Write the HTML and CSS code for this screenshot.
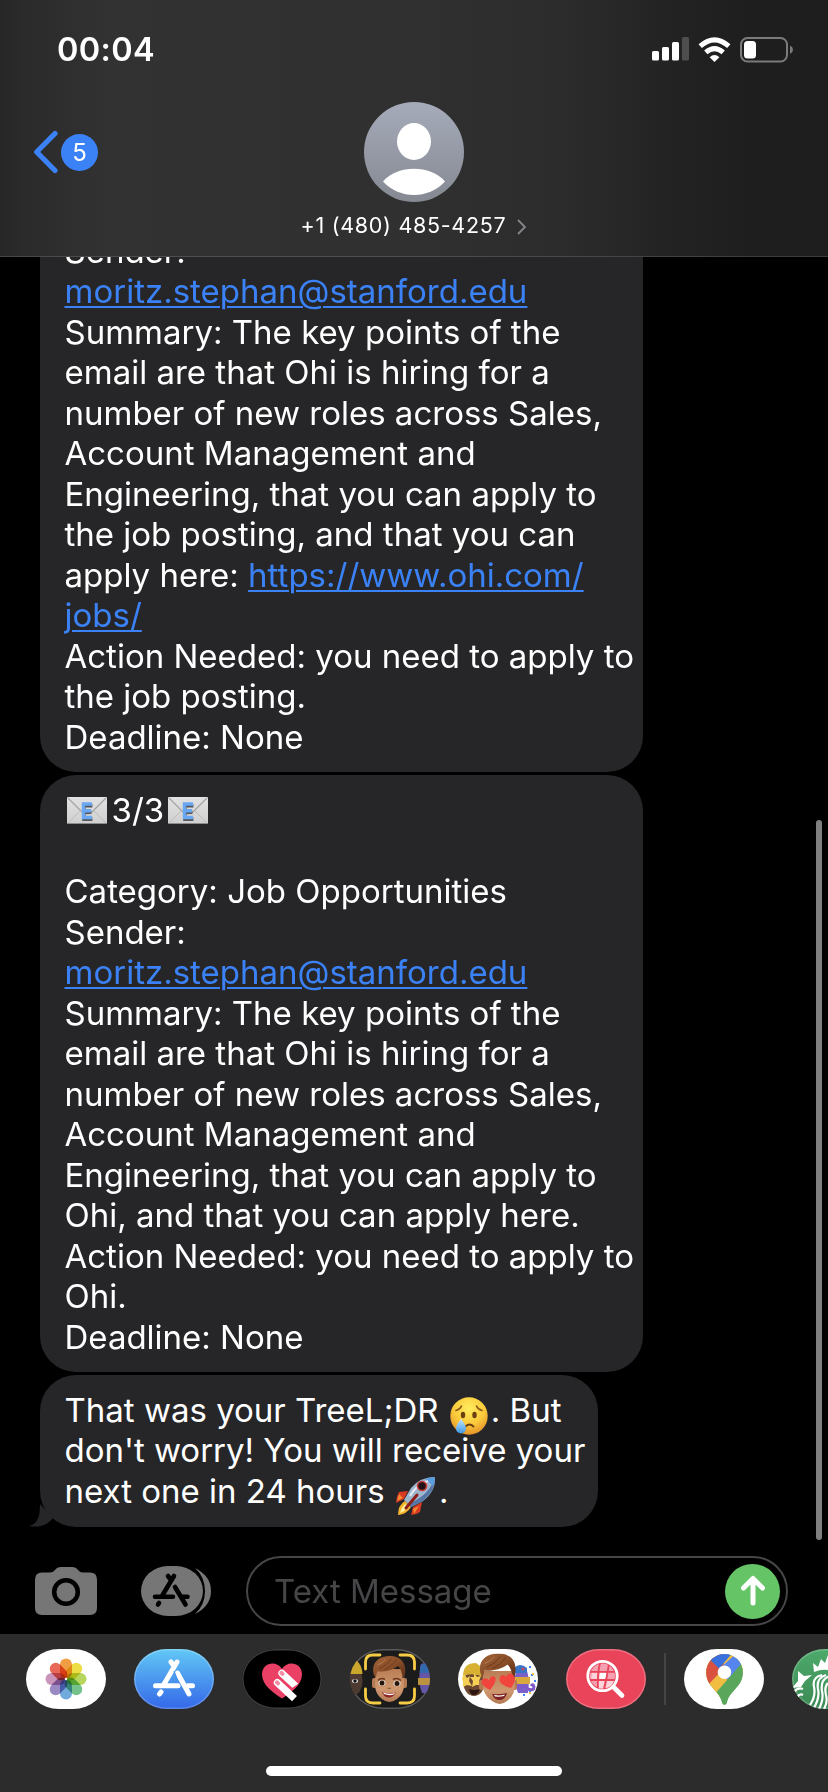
FILE: index.html
```html
<!DOCTYPE html>
<html lang="en">
<head>
    <meta charset="UTF-8">
    <meta name="viewport" content="width=device-width, initial-scale=1.0">
    <title>Messages</title>
    <link rel="stylesheet" href="styles.css">
</head>
<body>
    <!-- shared drawings -->
    <svg class="defs" width="0" height="0">
        <defs>
            <linearGradient id="paper" x1="0" y1="0" x2="0" y2="1">
                <stop offset="0" stop-color="#e2e2e2"/>
                <stop offset="1" stop-color="#cfcfcf"/>
            </linearGradient>
            <radialGradient id="yellow" cx="0.5" cy="0.3" r="0.7">
                <stop offset="0" stop-color="#ffec5e"/>
                <stop offset="0.6" stop-color="#fbc93a"/>
                <stop offset="1" stop-color="#e3922a"/>
            </radialGradient>
            <linearGradient id="tear" x1="0" y1="0" x2="0" y2="1">
                <stop offset="0" stop-color="#bfe6ff"/>
                <stop offset="1" stop-color="#3f97e0"/>
            </linearGradient>
            <linearGradient id="skin" x1="0" y1="0" x2="0" y2="1">
                <stop offset="0" stop-color="#b97d54"/>
                <stop offset="0.6" stop-color="#d09870"/>
                <stop offset="1" stop-color="#b47a54"/>
            </linearGradient>
            <linearGradient id="hair" x1="0" y1="0" x2="1" y2="1">
                <stop offset="0" stop-color="#a06238"/>
                <stop offset="0.5" stop-color="#8a4f29"/>
                <stop offset="1" stop-color="#5a2f17"/>
            </linearGradient>
            <symbol id="email" viewBox="0 0 40 27">
                <rect width="40" height="27" rx="1" fill="url(#paper)"/>
                <path d="M1 26 14 13M39 26 26 13" stroke="#bdbdbd" stroke-width="1" fill="none"/>
                <path d="M1 1 15 15Q20 19 25 15L39 1" stroke="#a3a3a5" stroke-width="1.2" fill="none"/>
                <path d="M0 26.5H40" stroke="#8b8b8b" stroke-width="1"/>
                <path d="M25 7.500H16.500V21H25M16.500 14H24" stroke="#55565b" stroke-width="3.400" fill="none" transform="translate(.4 1.200)"/>
                <path d="M25 7H16.500V20.500H25M16.500 13.700H24" stroke="#6aa7f2" stroke-width="3.400" fill="none"/>
            </symbol>
            <symbol id="boy-hair" viewBox="0 0 40 50">
                <path d="M3 20C0 8 8 0 21 0 34 0 41 9 37 24L35 25C35 19 33 14 30 11 24 16 13 18 7 17L5 25Z" fill="url(#hair)"/>
                <path d="M9 14Q18 10 23 3M15 15Q24 11 28 4M32 11Q36 14 36 20" stroke="#6b3a1c" stroke-width="1" fill="none"/>
                <path d="M7 10Q13 8 17 3" stroke="#b87c50" stroke-width="1" fill="none"/>
            </symbol>
        </defs>
    </svg>

    <div class="phone">
        <header class="header">
            <div class="status">
                <div class="time">00:04</div>
                <div class="status-icons">
                    <svg width="37" height="24" viewBox="0 0 37 24">
                        <rect x="0" y="14" width="7" height="9.500" rx="1.500" fill="#fff"/>
                        <rect x="10" y="10" width="7" height="13.500" rx="1.500" fill="#fff"/>
                        <rect x="20" y="5" width="7" height="18.500" rx="1.500" fill="#fff"/>
                        <rect x="30" y="0" width="7" height="23.500" rx="1.500" fill="#4e4e4e"/>
                    </svg>
                    <svg width="33" height="25" viewBox="0 0 33 25">
                        <g fill="none" stroke="#fff" stroke-width="5">
                            <path d="M2.200 9.200Q16.500 -3.400 30.800 9.200"/>
                            <path d="M7.800 15.400Q16.500 7.800 25.200 15.400"/>
                        </g>
                        <path d="M11.600 20.200Q16.500 16 21.400 20.200L16.500 25Z" fill="#fff"/>
                    </svg>
                    <svg width="54" height="26" viewBox="0 0 54 26">
                        <rect x="1" y="1" width="46" height="23.500" rx="6.500" fill="none" stroke="#7b7b7b" stroke-width="2"/>
                        <rect x="4" y="4" width="12" height="17.500" rx="3.500" fill="#fff"/>
                        <path d="M50 8.500Q53 10 53 12.700T50 17Z" fill="#7b7b7b"/>
                    </svg>
                </div>
            </div>
            <div class="back">
                <svg width="26" height="44" viewBox="0 0 26 44">
                    <path d="M22 3.500 3.700 22 22 40.500" fill="none" stroke="#3b82f7" stroke-width="5.200" stroke-linecap="round" stroke-linejoin="round"/>
                </svg>
                <span class="unread">5</span>
            </div>
            <div class="contact">
                <div class="avatar">
                    <svg width="100" height="100" viewBox="0 0 100 100">
                        <ellipse cx="50" cy="39.500" rx="17" ry="18.500" fill="#fff"/>
                        <path d="M19 79.500C33 62.500 67 62.500 81 79.500 64 97.500 36 97.500 19 79.500Z" fill="#fff"/>
                    </svg>
                </div>
                <div class="number">
                    <span>+1 (480) 485-4257</span>
                    <svg width="10" height="16" viewBox="0 0 10 16">
                        <path d="M1 1 8 8 1 15" fill="none" stroke="#85868c" stroke-width="1.800"/>
                    </svg>
                </div>
            </div>
        </header>

        <main class="chat">
            <div class="bubble">
                Sender:<br>
                <a class="link" href="#">moritz.stephan@stanford.edu</a><br>
                Summary: The key points of the<br>
                email are that Ohi is hiring for a<br>
                number of new roles across Sales,<br>
                Account Management and<br>
                Engineering, that you can apply to<br>
                the job posting, and that you can<br>
                apply here: <a class="link" href="#">https://www.ohi.com/<br>
                jobs/</a><br>
                Action Needed: you need to apply to<br>
                the job posting.<br>
                Deadline: None
            </div>
            <div class="bubble">
                <svg class="mail" width="40" height="27"><use href="#email"/></svg>3/3<svg class="mail" width="40" height="27"><use href="#email"/></svg><br>
                <br>
                Category: Job Opportunities<br>
                Sender:<br>
                <a class="link" href="#">moritz.stephan@stanford.edu</a><br>
                Summary: The key points of the<br>
                email are that Ohi is hiring for a<br>
                number of new roles across Sales,<br>
                Account Management and<br>
                Engineering, that you can apply to<br>
                Ohi, and that you can apply here.<br>
                Action Needed: you need to apply to<br>
                Ohi.<br>
                Deadline: None
            </div>
            <div class="bubble last">
                That was your TreeL;DR
                <svg class="emoji" width="38" height="38" viewBox="0 0 38 38">
                    <circle cx="19" cy="19" r="18.700" fill="url(#yellow)"/>
                    <ellipse cx="13" cy="18" rx="2.200" ry="3.200" fill="#6b3f12"/>
                    <ellipse cx="24.500" cy="18" rx="2.200" ry="3.200" fill="#6b3f12"/>
                    <path d="M6 13.500Q10 12.500 11.500 9M26.500 9Q28 12.500 32 13.500" fill="none" stroke="#8a5518" stroke-width="1.600" stroke-linecap="round"/>
                    <path d="M15.500 29.500Q19.500 25.500 23.500 29.500" fill="none" stroke="#6b3f12" stroke-width="1.800" stroke-linecap="round"/>
                    <path d="M11 22Q6 28 6 31.500A5 5 0 0 0 16 31.500Q16 28 11 22Z" fill="url(#tear)"/>
                </svg>. But<br>
                don't worry! You will receive your<br>
                next one in 24 hours
                <svg class="emoji rocket" width="40" height="40" viewBox="0 0 40 40">
                    <path d="M12 15 3 16Q0 21 0 27L8 23ZM26 26 24 36Q20 39 15 39L17 31Z" fill="#d93a22"/>
                    <path d="M3 18 1 25 7 22ZM23 30 18 38 17 33Z" fill="#f58a32"/>
                    <path d="M9 25Q2 29 2 39 11 38 15 31Z" fill="#f6b52d"/>
                    <path d="M9 28Q5 32 4 37 9 35 13 31Z" fill="#fff0a0"/>
                    <path d="M39 1Q24 1 15 12L8 24 15 31 27 25Q40 15 39 1Z" fill="#9fb6cf"/>
                    <path d="M39 1Q40 14 27 25L15 31 12 28Q34 19 39 1Z" fill="#5677a5"/>
                    <path d="M39 1Q34 1 29 3 33 6 37 10 39 6 39 1Z" fill="#5a9cdd"/>
                    <path d="M32 5Q20 9 14 20" stroke="#e6edf5" stroke-width="2" fill="none"/>
                    <circle cx="26" cy="10" r="4.500" fill="#23141a" stroke="#c83a33" stroke-width="1.600"/>
                    <path d="M21 19 10 32" stroke="#8c1f1a" stroke-width="3" stroke-linecap="round"/>
                </svg>.
                <svg class="tail" width="26" height="23" viewBox="0 0 26 23">
                    <path d="M11 0C11 12 9 20 0 22 11 24 18 21 24 14Z" fill="#262628"/>
                </svg>
            </div>
            <div class="scrollbar"></div>
        </main>

        <div class="composer">
            <svg class="camera" width="62" height="48" viewBox="0 0 62 48">
                <path d="M7 5.500H15Q18 5.500 20 3 22 0 26 0H37Q41 0 43 3 45 5.500 48 5.500H55Q62 5.500 62 12.500V41Q62 48 55 48H7Q0 48 0 41V12.500Q0 5.500 7 5.500Z" fill="#767676"/>
                <circle cx="31" cy="25" r="11.800" fill="none" stroke="#000" stroke-width="4.500"/>
            </svg>
            <svg class="apps" width="70" height="50" viewBox="0 0 70 50">
                <path d="M54 2Q70 10 70 25T54 48Q64 39 64 25T54 2Z" fill="#767676"/>
                <rect x="0" y="0" width="62" height="50" rx="27" ry="25" fill="#767676"/>
                <g stroke="#000" stroke-width="4.600" stroke-linecap="round" fill="none">
                    <path d="M33 10 21 30M27 10 30 14M34 21 44.500 38.500M14 30.700H32M41 30.700H46.500M18 37 17 38.500"/>
                </g>
            </svg>
            <div class="field">
                <span class="placeholder">Text Message</span>
                <div class="send">
                    <svg width="26" height="32" viewBox="0 0 26 32">
                        <path d="M13 28V4M3.500 13 13 3.500 22.500 13" fill="none" stroke="#fff" stroke-width="5" stroke-linecap="round" stroke-linejoin="round"/>
                    </svg>
                </div>
            </div>
        </div>

        <footer class="dock">
            <div class="app-row">
                <div class="app photos">
                    <svg width="80" height="60" viewBox="-40 -30 80 60">
                        <g class="petals">
                            <rect x="-6" y="-20.500" width="12" height="20" rx="6" fill="#f0983a"/>
                            <rect x="-6" y="-20.500" width="12" height="20" rx="6" fill="#ecdc3a" transform="rotate(45)"/>
                            <rect x="-6" y="-20.500" width="12" height="20" rx="6" fill="#b4d455" transform="rotate(90)"/>
                            <rect x="-6" y="-20.500" width="12" height="20" rx="6" fill="#6fbf86" transform="rotate(135)"/>
                            <rect x="-6" y="-20.500" width="12" height="20" rx="6" fill="#6ba6da" transform="rotate(180)"/>
                            <rect x="-6" y="-20.500" width="12" height="20" rx="6" fill="#9583c0" transform="rotate(225)"/>
                            <rect x="-6" y="-20.500" width="12" height="20" rx="6" fill="#c78fb8" transform="rotate(270)"/>
                            <rect x="-6" y="-20.500" width="12" height="20" rx="6" fill="#e8614f" transform="rotate(315)"/>
                        </g>
                        <circle r="1.200" fill="#fff"/>
                    </svg>
                </div>
                <div class="app store">
                    <svg width="80" height="60" viewBox="0 0 80 60">
                        <g stroke="#fff" stroke-width="5" stroke-linecap="round" fill="none">
                            <path d="M43 13 29.500 36M37 13 40 17M43.500 24 55 45M21.500 36.700H44M54 36.700H58.500M27 43 25.500 45"/>
                        </g>
                        <path d="M40 22 44 33" stroke="#4a94f0" stroke-width="1.200"/>
                    </svg>
                </div>
                <div class="app touch">
                    <svg width="80" height="60" viewBox="0 0 80 60">
                        <path d="M40 49.500C31 43.500 20 36 20 25.500 20 13 35 11 40 20 45 11 60 13 60 25.500 60 36 49 43.500 40 49.500Z" fill="#ea4066"/>
                        <g transform="rotate(-47 48 34)">
                            <path d="M44.500 44V26.500A3.600 3.600 0 0 1 51.700 26.500V45.500Z" fill="#fff" transform="translate(1.500 -5)"/>
                            <path d="M36 50V26.500A3.600 3.600 0 0 1 43.200 26.500V50Z" fill="#fff" transform="translate(0 -2)"/>
                            <rect x="47.600" y="18.800" width="4" height="5.500" rx="2" fill="#f08da5"/>
                            <rect x="37.600" y="22" width="4" height="5.500" rx="2" fill="#f08da5"/>
                        </g>
                    </svg>
                </div>
                <div class="app memoji">
                    <svg width="80" height="60" viewBox="0 0 80 60">
                        <ellipse cx="4" cy="32" rx="8.500" ry="14" fill="#4d3a30"/>
                        <path d="M-4 25Q-2 12 7 12 12 16 12.500 25Z" fill="#c9a62c"/>
                        <ellipse cx="5" cy="32" rx="3" ry="2" fill="#ddd"/>
                        <circle cx="5" cy="32" r="1.700" fill="#111"/>
                        <path d="M71 15Q80 12 84 18V44H72Q67 32 71 15Z" fill="#6656a8"/>
                        <path d="M70 17Q76 11 84 17V24H70Z" fill="#3268ac"/>
                        <rect x="68" y="29" width="14" height="7" fill="#bb9240"/>
                        <rect x="22" y="29" width="5" height="10" rx="2" fill="#b47a54"/>
                        <rect x="52" y="29" width="5" height="10" rx="2" fill="#b47a54"/>
                        <path d="M25 20H54V35Q54 45 47 50 39.500 56 32 50 25 45 25 35Z" fill="url(#skin)"/>
                        <use href="#boy-hair" x="21" y="7" width="36" height="45"/>
                        <path d="M28 31.500Q31 28 35 30.500M43 30.500Q47 28 51 31.500" stroke="#6b3a1c" stroke-width="1.500" fill="none"/>
                        <ellipse cx="32" cy="34" rx="3.500" ry="2.800" fill="#eee"/>
                        <ellipse cx="47" cy="34.500" rx="3.500" ry="2.800" fill="#eee"/>
                        <circle cx="32" cy="34" r="2.500" fill="#25150c"/>
                        <circle cx="47" cy="34.500" r="2.500" fill="#25150c"/>
                        <path d="M37.500 39Q39 40 41 39" stroke="#96603c" stroke-width="1.300" fill="none"/>
                        <path d="M32 43Q39 46 46 43.500 43 49 38 48.500 34 48 32 43Z" fill="#8c2428"/>
                        <path d="M33 43.500Q39 46 45 44L44 45.500Q39 47 34 45Z" fill="#fff"/>
                        <path d="M15.500 20V13Q15.500 6 23 6H30M50 6H57Q64.500 6 64.500 13V20M64.500 40V47Q64.500 54 57 54H50M30 54H23Q15.500 54 15.500 47V40" stroke="#f6cb45" stroke-width="2.800" stroke-linecap="round" fill="none"/>
                    </svg>
                </div>
                <div class="app stickers">
                    <svg width="80" height="60" viewBox="0 0 80 60">
                        <ellipse cx="16" cy="34" rx="10.500" ry="13" fill="#6e4a32"/>
                        <path d="M5 27Q5 14 18 14L26 20V28Q14 23 5 27Z" fill="#d8b132"/>
                        <path d="M6 25 9 29 12 27 11 32 14 37 9 36 5 38 5 33 4 29Z" fill="#f6cf55"/>
                        <path d="M16 24 19 28 23 27 21 32 23 36 18 36 14 38 15 32 12 28 16 28Z" fill="#f6cf55"/>
                        <path d="M11 40Q16 42 22 40 20 46 16 46T11 40Z" fill="#2c1512"/>
                        <path d="M58 22H69Q72 30 70 44H60Q55 32 58 22Z" fill="#7a60c8"/>
                        <path d="M56 19Q62 13 69 19V24H57Z" fill="#3576c8"/>
                        <circle cx="65" cy="20" r="1.600" fill="#d4465a"/>
                        <rect x="57" y="28" width="15" height="7" fill="#d9a93d"/>
                        <path d="M60 39Q66 35 70 40 76 42 76 38 75 34 73 37" stroke="#7d59c9" stroke-width="3" fill="none"/>
                        <path d="M71 18h2M73 26h2M76 32h2M65 46h2M71 43h2" stroke="#3b82f7" stroke-width="2"/>
                        <path d="M74 25h2M71 44h2" stroke="#f5c23c" stroke-width="2"/>
                        <rect x="21" y="31" width="5" height="10" rx="2" fill="#b47a54"/>
                        <rect x="55" y="31" width="4" height="10" rx="2" fill="#b47a54"/>
                        <path d="M24 22H57V36Q57 46 49 52 42 58 34 52 25 46 25 36Z" fill="url(#skin)"/>
                        <use href="#boy-hair" x="19.500" y="4.500" width="40" height="50"/>
                        <path d="M32 41C24 37 22 33 25 30 28 28 31 30 31 32 31 28 35 26 37 28 39 31 36 36 32 41Z" fill="#f0443c"/>
                        <path d="M53 39C45 37 40 33 42 28 44 25 47 26 48 28 49 24 54 23 56 27 58 31 56 35 53 39Z" fill="#f0443c"/>
                        <path d="M34 45Q41 46 49 44 47 51 42 51 36 51 34 45Z" fill="#7c2020"/>
                        <path d="M36 46Q42 47 47 45.500L46 47Q42 48 37 47.500Z" fill="#fff"/>
                    </svg>
                </div>
                <div class="app images">
                    <svg width="80" height="60" viewBox="0 0 80 60">
                        <circle cx="36.500" cy="27" r="12.500" fill="#f5a0b0"/>
                        <path d="M26 23.500H32V30.500H25ZM33.500 23.500H40L39.500 30.500H33ZM41 31.500H48Q46 38 40 39ZM33 31.500H39L37 39.500H32Z" fill="#fbd5dc"/>
                        <path d="M34 24H40.500L39.500 30H33.500Z" fill="#fff"/>
                        <path d="M24 22.800H49M24 31H49M34 14Q31 27 32 40M43 15Q41 28 38 40" stroke="#ea445a" stroke-width="1.800" fill="none"/>
                        <circle cx="36.500" cy="27" r="14.700" fill="none" stroke="#fff" stroke-width="2.800"/>
                        <path d="M47.500 38 56 46.500" stroke="#fff" stroke-width="4.600" stroke-linecap="round"/>
                    </svg>
                </div>
                <div class="divider"></div>
                <div class="app maps">
                    <svg width="80" height="60" viewBox="0 0 80 60">
                        <clipPath id="pin"><path d="M40.500 5A18.300 18.300 0 0 1 58.800 23.300C58.800 38 46 41 43 53 42.300 56.500 38.700 56.500 38 53 35 41 22.200 38 22.200 23.300A18.300 18.300 0 0 1 40.500 5Z"/></clipPath>
                        <g clip-path="url(#pin)">
                            <rect width="80" height="60" fill="#5aa75b"/>
                            <path d="M0 0H80L33 52 0 60Z" fill="#f1bd41"/>
                            <path d="M0 0H36L40.500 18.500 24 36 0 30Z" fill="#d95140"/>
                            <path d="M20 6 26.500 11 35 19.500 52 0H20Z" fill="#3871de"/>
                            <path d="M55 2 34 21 44 31 58.500 14Z" fill="#5685ee"/>
                            <path d="M60 11.500 33 42.500V60H80V11Z" fill="#5aa75b"/>
                        </g>
                        <circle cx="40.500" cy="23.300" r="6.800" fill="#fff"/>
                    </svg>
                </div>
                <div class="app coffee">
                    <svg width="80" height="60" viewBox="0 0 80 60">
                        <g fill="#fff">
                            <path d="M6 22 12 27 20 26 13 32 9 38 0 39 6 32Z"/>
                            <path d="M22 23 21 14 26 18 29 10 33 14 36 6 40 12 44 6V24Q34 18 22 23Z"/>
                        </g>
                        <g fill="none" stroke="#fff" stroke-width="2.200">
                            <path d="M2 43Q6 38 11 40M5 48Q8 44 11 46"/>
                            <path d="M30 26Q20 28 22 38 24 47 18 56M34 26Q24 29 26 40 28 48 22 59M38 27Q28 30 30 42 32 50 27 60M36 34Q32 38 34 46 36 53 32 60"/>
                        </g>
                    </svg>
                </div>
            </div>
            <div class="home-bar"></div>
        </footer>
    </div>
</body>
</html>
```
FILE: styles.css
```css
* {
    box-sizing: border-box;
}
body {
    margin: 0;
    background-color: #000;
    color: #fff;
    font-family: Inter, "Liberation Sans", sans-serif;
}
.defs {
    position: absolute;
}
.phone {
    width: 828px;
    height: 1792px;
    display: flex;
    flex-direction: column;
    overflow: hidden;
}
svg {
    flex: none;
}

/* header */
.header {
    position: relative;
    height: 257px;
    flex: none;
    background: linear-gradient(90deg, #272727 0, #2b2b2b 28px, #323232 110px, #303030 400px, #2c2c2c 560px, #222 680px, #1e1e1e 750px);
    border-bottom: 1px solid rgba(255, 255, 255, 0.14);
}
.status {
    display: flex;
    justify-content: space-between;
    padding: 30px 34px 0 57px;
    height: 102px;
}
.time {
    font-size: 32.5px;
    font-weight: 600;
    line-height: 40px;
    letter-spacing: 0.3px;
}
.status-icons {
    display: flex;
    gap: 9px;
    padding-top: 7px;
}
.back {
    position: absolute;
    left: 33px;
    top: 130px;
    display: flex;
    align-items: center;
    gap: 2px;
}
.unread {
    width: 37px;
    height: 37px;
    border-radius: 50%;
    background-color: #3b82f7;
    font-size: 24px;
    line-height: 37px;
    text-align: center;
}
.contact {
    display: flex;
    flex-direction: column;
    align-items: center;
}
.avatar {
    width: 100px;
    height: 100px;
    border-radius: 50%;
    background: linear-gradient(#a6abba, #858992);
    overflow: hidden;
}
.number {
    display: flex;
    align-items: center;
    gap: 11px;
    margin-top: 9px;
    font-size: 21.5px;
    line-height: 28px;
    letter-spacing: 0.7px;
}
.number svg {
    margin-top: 4px;
}

/* messages */
.chat {
    position: relative;
    height: 1285px;
    flex: none;
    padding: 0 0 15.3px 40px;
    display: flex;
    flex-direction: column;
    justify-content: flex-end;
    align-items: flex-start;
    gap: 2.3px;
    overflow: hidden;
}
.bubble {
    position: relative;
    flex: none;
    width: 603px;
    padding: 15.3px 0 15.3px 24.5px;
    border-radius: 36px;
    background-color: #262628;
    font-size: 33px;
    line-height: 40.5px;
    white-space: nowrap;
    letter-spacing: 0;
}
.bubble.last {
    width: 558px;
}
.link {
    color: #3b82f7;
    text-decoration: underline;
    text-decoration-thickness: 2px;
    text-underline-offset: 3px;
}
.mail {
    vertical-align: -2px;
    margin: 0 5px 0 2px;
}
.mail + .mail {
    margin-left: 4px;
}
.emoji {
    vertical-align: -7px;
    margin: -6px 3px -6px 2px;
}
.tail {
    position: absolute;
    left: -11px;
    bottom: 0;
}
.scrollbar {
    position: absolute;
    right: 6px;
    top: 563px;
    width: 6px;
    height: 720px;
    border-radius: 3px;
    background-color: #7f7f7f;
}

/* text input */
.composer {
    height: 92px;
    flex: none;
    display: flex;
    align-items: flex-start;
    padding: 14px 40px 0 35px;
}
.camera {
    margin-top: 11px;
}
.apps {
    margin: 10px 35px 0 44px;
}
.field {
    flex: 1;
    height: 70px;
    display: flex;
    align-items: center;
    justify-content: space-between;
    padding: 0 6px 0 26px;
    border: 2px solid #464648;
    border-radius: 35px;
}
.placeholder {
    color: #464648;
    font-size: 33px;
    letter-spacing: 0;
}
.send {
    width: 55px;
    height: 55px;
    border-radius: 50%;
    background-color: #65c466;
    display: flex;
    align-items: center;
    justify-content: center;
}

/* app strip */
.dock {
    flex: 1;
    background-color: #2c2c2c;
    padding: 15px 0 16px 26px;
    display: flex;
    flex-direction: column;
    justify-content: space-between;
}
.app-row {
    display: flex;
    align-items: center;
    gap: 28px;
}
.app {
    flex: none;
    width: 80px;
    height: 60px;
    border-radius: 33px / 30px;
    background-color: #fff;
    overflow: hidden;
}
.app svg {
    display: block;
}
.petals rect {
    mix-blend-mode: multiply;
    opacity: 0.95;
}
.store {
    background: linear-gradient(#62c8f5, #3468e8);
    box-shadow: inset 0 0 0 1.5px rgba(255, 255, 255, 0.2);
}
.touch {
    background-color: #000;
    box-shadow: inset 0 0 0 1.5px #3c3c3c;
}
.memoji {
    background-color: #1b1b1b;
    box-shadow: inset 0 0 0 1.5px #5a5a5a;
}
.images {
    background-color: #ea445a;
    box-shadow: inset 0 0 0 1.5px rgba(255, 255, 255, 0.22);
}
.coffee {
    background: linear-gradient(#4daa6b, #3c8a54);
    box-shadow: inset 0 0 0 1.5px rgba(255, 255, 255, 0.2);
}
.divider {
    flex: none;
    width: 2px;
    height: 52px;
    margin: 0 -10px;
    background-color: #454545;
}
.home-bar {
    width: 296px;
    height: 10px;
    margin-left: 240px;
    border-radius: 5px;
    background-color: #fff;
}
```
